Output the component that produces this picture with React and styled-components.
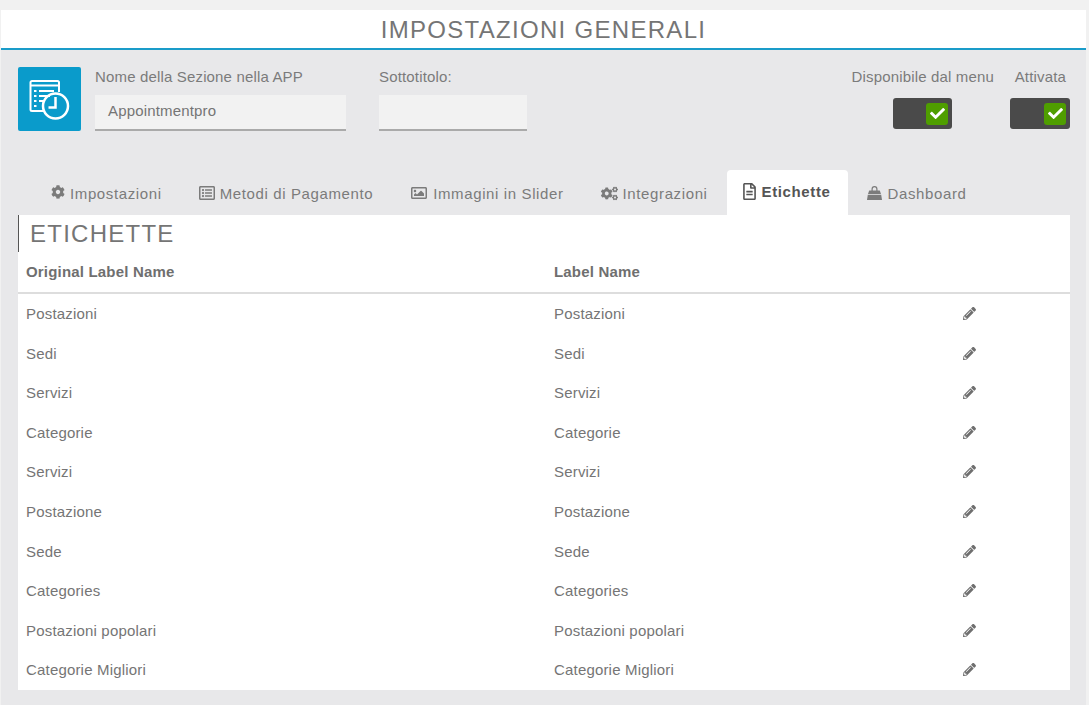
import styled, { createGlobalStyle } from "styled-components";
import {
  FaCheck,
  FaCog,
  FaCogs,
  FaPencilAlt,
  FaRegFileAlt,
  FaRegImage,
  FaRegListAlt,
} from "react-icons/fa";

const GlobalStyle = createGlobalStyle`
  html, body {
    margin: 0;
    padding: 0;
    background: #f1f1f1;
    font-family: "Liberation Sans", Arial, sans-serif;
    color: #757575;
  }
`;

const Page = styled.div`
  width: 1085px;
  height: 705px;
  margin-left: 1px;
  padding-top: 10px;
  box-sizing: border-box;
  overflow: hidden;
`;

const Header = styled.header`
  height: 40px;
  box-sizing: border-box;
  padding-top: 2px;
  background: #fff;
  border-bottom: 2px solid #1a9cc9;
  display: flex;
  align-items: center;
  justify-content: center;
  font-size: 24px;
  letter-spacing: 1.3px;
  color: #757575;
`;

const Main = styled.main`
  background: #e8e8ea;
  height: 655px;
  padding: 17px 16px 0 17px;
  box-sizing: border-box;
`;

const TopRow = styled.section`
  display: flex;
  height: 103px;
`;

const SectionIcon = styled.div`
  width: 63px;
  height: 64px;
  background: #0a9bcb;
  border-radius: 2px;
  display: flex;
  align-items: center;
  justify-content: center;
  margin-right: 14px;
`;

const Field = styled.div`
  width: ${(props) => props.$width};
  margin-right: ${(props) => props.$gap || "0"};
`;

const FieldLabel = styled.div`
  font-size: 15px;
  letter-spacing: 0.16px;
  line-height: 20px;
  height: 28px;
  color: #7b7b7b;
`;

const TextBox = styled.div`
  height: 34px;
  background: #f2f2f2;
  border-bottom: 2px solid #aaa;
  font-size: 15px;
  letter-spacing: 0.16px;
  line-height: 32px;
  padding-left: 13px;
  color: #757575;
`;

const Spacer = styled.div`
  flex: 1;
`;

const ToggleColumn = styled.div`
  display: flex;
  flex-direction: column;
  align-items: flex-end;
  margin-left: ${(props) => props.$gap || "0"};
`;

const ToggleLabel = styled.div`
  font-size: 15px;
  letter-spacing: 0.16px;
  line-height: 20px;
  height: 31px;
  color: #7b7b7b;
  white-space: nowrap;
  padding-right: ${(props) => props.$pad || "0"};
`;

const Toggle = styled.div`
  width: ${(props) => props.$width || "59px"};
  height: 31px;
  background: #4a4a4a;
  border-radius: 3px;
  display: flex;
  align-items: center;
  justify-content: flex-end;
  padding-right: 4px;
  box-sizing: border-box;
  margin-right: ${(props) => props.$shift || "0"};
`;

const ToggleKnob = styled.div`
  width: 22px;
  height: 22px;
  background: #4f9e00;
  border-radius: 3px;
  color: #fff;
  display: flex;
  align-items: center;
  justify-content: center;
  font-size: 15px;
`;

const Tabs = styled.nav`
  display: flex;
  height: 45px;
  padding-left: 15px;
`;

const Tab = styled.div`
  height: 45px;
  box-sizing: border-box;
  padding: ${(props) => (props.$active ? "13px 17px 0 14px" : "15px 19px 0 18px")};
  margin-right: ${(props) => props.$gap || "0"};
  display: flex;
  align-items: flex-start;
  gap: ${(props) => props.$iconGap || "5px"};
  font-size: 15px;
  line-height: 17px;
  letter-spacing: 0.62px;
  white-space: nowrap;
  border-radius: 4px 4px 0 0;
  background: ${(props) => (props.$active ? "#fff" : "transparent")};
  font-weight: ${(props) => (props.$active ? "bold" : "normal")};
  color: ${(props) => (props.$active ? "#555" : "#7b7b7b")};

  svg {
    flex: none;
    font-size: ${(props) => props.$iconSize || "15px"};
  }
`;

const Panel = styled.section`
  background: #fff;
  height: 475px;
`;

const PanelTitle = styled.h2`
  margin: 0;
  height: 37px;
  border-left: 1px solid #555;
  padding-left: 11px;
  font-size: 24px;
  font-weight: normal;
  line-height: 37px;
  letter-spacing: 1.25px;
  color: #757575;
`;

const Grid = styled.div`
  display: grid;
  grid-template-columns: 528px 409px 1fr;
`;

const HeadCell = styled.div`
  height: 42px;
  line-height: 40px;
  padding-left: 8px;
  font-size: 15px;
  letter-spacing: 0.18px;
  font-weight: bold;
  color: #6f6f6f;
  border-bottom: 2px solid #ddd;
  box-sizing: border-box;
`;

const Cell = styled.div`
  height: 39.55px;
  display: flex;
  align-items: center;
  padding-left: 8px;
  font-size: 15px;
  letter-spacing: 0.18px;
  color: #757575;

  svg {
    font-size: 13px;
    color: #6f6f6f;
  }
`;

const AppointmentIcon = () => (
  <svg width="42" height="42" viewBox="0 0 42 42" fill="none" stroke="#fff" strokeWidth="2">
    <path d="M15 33H3a1.500 1.500 0 0 1-1.500-1.500V4.500A1.500 1.500 0 0 1 3 3h25.500A1.500 1.500 0 0 1 30 4.500V14" />
    <path d="M2 7.500h28" />
    <path d="M10 13h15M10 18h11M10 23h6M5 13h2.500M5 18h2.500M5 23h2.500M5 28h2.500" />
    <circle cx="26.500" cy="28" r="12.500" strokeWidth="2.500" />
    <path d="M26.500 19V29.500H19.500" strokeWidth="2.500" />
  </svg>
);

const BagIcon = () => (
  <svg width="15" height="14" viewBox="0 0 15 14" fill="currentColor" style={{ marginTop: 1 }}>
    <path d="M4.500 5V3a3 3 0 0 1 6 0V5H9.300V3a1.800 1.800 0 0 0-3.600 0V5z" />
    <path d="M2.200 4.500h10.600L14 8H1z" />
    <path d="M.8 8.700h13.400L15 14H0z" />
  </svg>
);

const labels = [
  "Postazioni",
  "Sedi",
  "Servizi",
  "Categorie",
  "Servizi",
  "Postazione",
  "Sede",
  "Categories",
  "Postazioni popolari",
  "Categorie Migliori",
];

function Row({ label }) {
  return (
    <>
      <Cell>{label}</Cell>
      <Cell>{label}</Cell>
      <Cell>
        <FaPencilAlt />
      </Cell>
    </>
  );
}

export default function App() {
  return (
    <Page>
      <GlobalStyle />
      <Header>IMPOSTAZIONI GENERALI</Header>
      <Main>
        <TopRow>
          <SectionIcon>
            <AppointmentIcon />
          </SectionIcon>
          <Field $width="251px" $gap="33px">
            <FieldLabel>Nome della Sezione nella APP</FieldLabel>
            <TextBox>Appointmentpro</TextBox>
          </Field>
          <Field $width="148px">
            <FieldLabel>Sottotitolo:</FieldLabel>
            <TextBox />
          </Field>
          <Spacer />
          <ToggleColumn>
            <ToggleLabel>Disponibile dal menu</ToggleLabel>
            <Toggle $shift="42px">
              <ToggleKnob>
                <FaCheck />
              </ToggleKnob>
            </Toggle>
          </ToggleColumn>
          <ToggleColumn $gap="16px">
            <ToggleLabel $pad="4px">Attivata</ToggleLabel>
            <Toggle $width="60px">
              <ToggleKnob>
                <FaCheck />
              </ToggleKnob>
            </Toggle>
          </ToggleColumn>
        </TopRow>
        <Tabs>
          <Tab $iconSize="14px">
            <FaCog />
            Impostazioni
          </Tab>
          <Tab $iconSize="16px" $gap="1px">
            <FaRegListAlt />
            Metodi di Pagamento
          </Tab>
          <Tab $iconSize="16px" $iconGap="6px">
            <FaRegImage />
            Immagini in Slider
          </Tab>
          <Tab $iconSize="17px">
            <FaCogs />
            Integrazioni
          </Tab>
          <Tab $active $iconSize="17px" $iconGap="4px" $gap="1px">
            <FaRegFileAlt />
            Etichette
          </Tab>
          <Tab $iconGap="6px">
            <BagIcon />
            Dashboard
          </Tab>
        </Tabs>
        <Panel>
          <PanelTitle>ETICHETTE</PanelTitle>
          <Grid>
            <HeadCell>Original Label Name</HeadCell>
            <HeadCell>Label Name</HeadCell>
            <HeadCell />
            {labels.map((label, index) => (
              <Row key={index} label={label} />
            ))}
          </Grid>
        </Panel>
      </Main>
    </Page>
  );
}
